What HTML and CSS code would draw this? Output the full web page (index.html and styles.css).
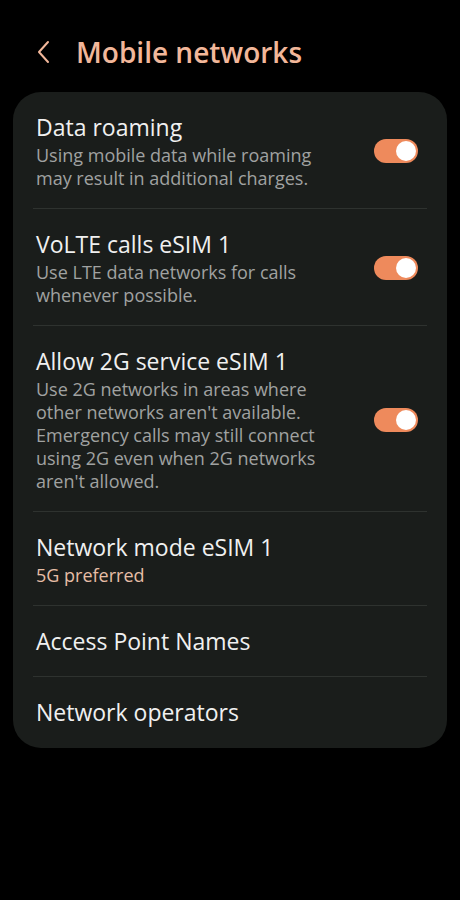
FILE: index.html
```html
<!DOCTYPE html>
<html>
<head>
  <title>Mobile networks</title>
  <link rel="stylesheet" href="styles.css">
</head>
<body>

  <div class="header">
    <svg class="back" width="16" height="24" viewBox="0 0 16 24">
      <path d="M12 2 L3 12 L12 22" fill="none" stroke="#f2b79a" stroke-width="2" stroke-linecap="round" stroke-linejoin="round"/>
    </svg>
    <h1>Mobile networks</h1>
  </div>

  <div class="card">
    <div class="row">
      <div class="text">
        <div class="title">Data roaming</div>
        <div class="sub">Using mobile data while roaming may result in additional charges.</div>
      </div>
      <div class="switch on"><span class="knob"></span></div>
    </div>

    <div class="row">
      <div class="text">
        <div class="title">VoLTE calls eSIM 1</div>
        <div class="sub">Use LTE data networks for calls whenever possible.</div>
      </div>
      <div class="switch on"><span class="knob"></span></div>
    </div>

    <div class="row">
      <div class="text">
        <div class="title">Allow 2G service eSIM 1</div>
        <div class="sub">Use 2G networks in areas where other networks aren't available. Emergency calls may still connect using 2G even when 2G networks aren't allowed.</div>
      </div>
      <div class="switch on"><span class="knob"></span></div>
    </div>

    <div class="row">
      <div class="text">
        <div class="title">Network mode eSIM 1</div>
        <div class="sub accent">5G preferred</div>
      </div>
    </div>

    <div class="row">
      <div class="text">
        <div class="title">Access Point Names</div>
      </div>
    </div>

    <div class="row">
      <div class="text">
        <div class="title">Network operators</div>
      </div>
    </div>
  </div>

</body>
</html>
```

FILE: styles.css
```css
body {
  margin: 0;
  background: #000;
  font-family: "Open Sans", Roboto, sans-serif;
  color: #f0f0f0;
}

.header {
  display: flex;
  align-items: center;
  height: 92px;
  padding: 12px 0 0 36px;
  box-sizing: border-box;
}

.back {
  margin-right: 24px;
}

h1 {
  margin: 0;
  font-size: 28px;
  font-weight: 600;
  color: #f2b79a;
}

.card {
  margin: 0 13px;
  background: #1a1d1b;
  border-radius: 28px;
  padding: 0 20px;
}

.row {
  display: flex;
  align-items: center;
  padding: 20px 9px 18px 3px;
  border-bottom: 1px solid #2e322f;
}

.row:last-child {
  border-bottom: none;
  padding-bottom: 21px;
}

.row:nth-child(5) {
  padding-bottom: 20px;
}

.text {
  flex: 1;
  padding-right: 40px;
}

.title {
  font-size: 23px;
  line-height: 30px;
}

.sub {
  margin-top: 2px;
  font-size: 18px;
  line-height: 23px;
  color: #a0a2a1;
}

.sub.accent {
  color: #e6bea6;
}

.switch {
  width: 44px;
  height: 24px;
  border-radius: 12px;
  background: #ee8a5c;
  display: flex;
  align-items: center;
  justify-content: flex-end;
  padding: 0 2px;
  box-sizing: border-box;
  flex-shrink: 0;
}

.knob {
  width: 20px;
  height: 20px;
  border-radius: 50%;
  background: #fff;
}
```
